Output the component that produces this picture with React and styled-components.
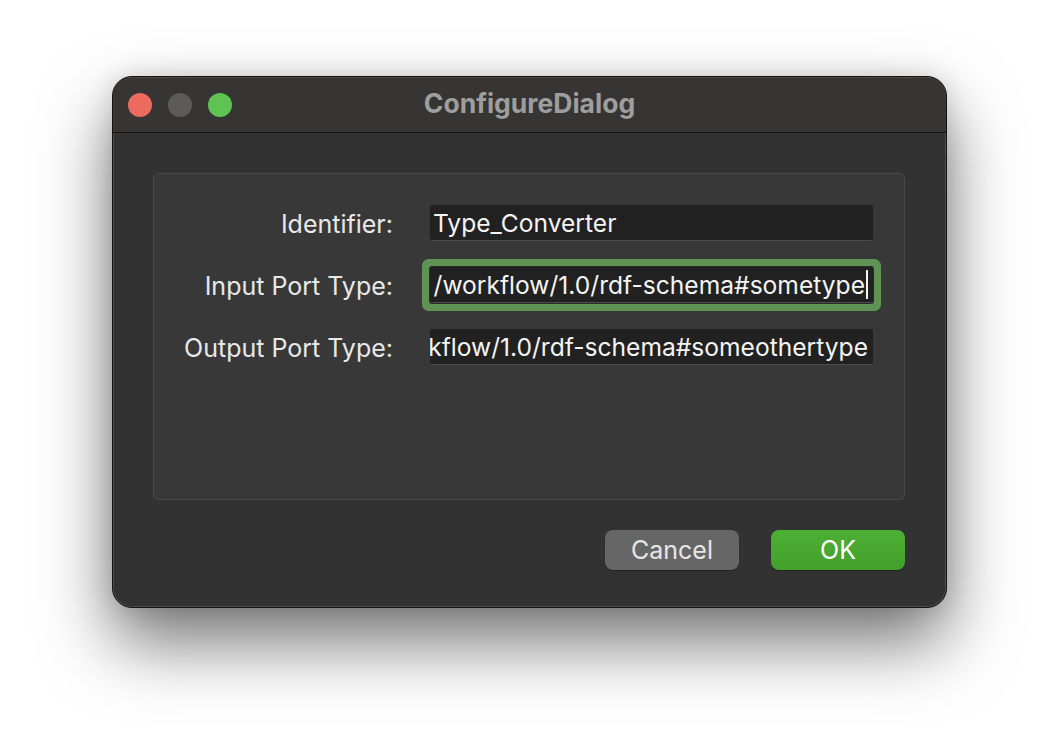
import React from "react";
import styled, { createGlobalStyle } from "styled-components";

const GlobalStyle = createGlobalStyle`
  * { box-sizing: border-box; }
  body {
    margin: 0;
    background: #ffffff;
    font-family: "Inter", "Liberation Sans", sans-serif;
  }
`;

const Page = styled.div`
  width: 1058px;
  height: 756px;
  padding: 76px 0 0 112px;
`;

const Window = styled.div`
  width: 835px;
  height: 532px;
  display: flex;
  flex-direction: column;
  background: #323232;
  border: 1px solid #141414;
  border-radius: 20px;
  overflow: hidden;
  box-shadow: inset 0 0 0 1px rgba(255, 255, 255, 0.13),
    0 34px 70px rgba(0, 0, 0, 0.55), 0 0 24px rgba(0, 0, 0, 0.12);
`;

const TitleBar = styled.div`
  height: 56px;
  flex-shrink: 0;
  display: grid;
  grid-template-columns: 1fr auto 1fr;
  align-items: center;
  padding: 0 15px;
  background: #363534;
  border-bottom: 1px solid #141414;
  box-shadow: inset 0 1px 0 rgba(255, 255, 255, 0.1);
`;

const Lights = styled.div`
  display: flex;
  gap: 16px;
`;

const Light = styled.span`
  width: 24px;
  height: 24px;
  border-radius: 50%;
  background: ${(p) => p.color};
`;

const Title = styled.div`
  color: #9e9e9e;
  font-size: 26.5px;
  font-weight: 700;
  line-height: 1;
  padding-bottom: 2px;
`;

const Body = styled.div`
  flex: 1;
  display: flex;
  flex-direction: column;
  padding: 40px 41px 0 40px;
`;

const GroupBox = styled.div`
  height: 327px;
  background: #383838;
  border: 1px solid #4a4a4a;
  border-radius: 6px;
  padding-top: 31px;
`;

const Form = styled.div`
  display: grid;
  grid-template-columns: 239px 443px;
  column-gap: 37px;
  row-gap: 26px;
  align-items: center;
`;

const Label = styled.div`
  text-align: right;
  color: #e8e8e8;
  font-size: 25px;
  line-height: 1;
  padding-top: 2px;
`;

const Field = styled.div`
  height: 36px;
  display: flex;
  align-items: center;
  justify-content: ${(p) => (p.scrolled ? "flex-end" : "flex-start")};
  overflow: hidden;
  white-space: nowrap;
  padding: 0 5px 0 3px;
  background: #212121;
  border-bottom: 1px solid #4c4c4c;
  border-radius: 2px;
  color: #f4f4f4;
  font-size: 24.6px;
  box-shadow: ${(p) =>
    p.focused ? "0 0 0 1px #2a2a2a, 0 0 0 8px #5e9354" : "none"};
`;

const Caret = styled.span`
  flex-shrink: 0;
  width: 2px;
  height: 29px;
  margin-left: 1px;
  background: #f2f2f2;
`;

const Buttons = styled.div`
  display: flex;
  justify-content: flex-end;
  gap: 32px;
  margin-top: 30px;
`;

const Button = styled.button`
  width: 134px;
  height: 40px;
  border: none;
  border-radius: 8px;
  font-family: inherit;
  font-size: 25px;
  line-height: 1;
  color: ${(p) => (p.primary ? "#ffffff" : "#e6e6e6")};
  background: ${(p) =>
    p.primary ? "linear-gradient(#4daf34, #43a02b)" : "#666666"};
  box-shadow: 0 1px 1px rgba(0, 0, 0, 0.35);
`;

export default function App() {
  return (
    <Page>
      <GlobalStyle />
      <Window>
        <TitleBar>
          <Lights>
            <Light color="#ed6a5e" />
            <Light color="#5c5b5a" />
            <Light color="#5fc354" />
          </Lights>
          <Title>ConfigureDialog</Title>
          <span />
        </TitleBar>
        <Body>
          <GroupBox>
            <Form>
              <Label>Identifier:</Label>
              <Field>Type_Converter</Field>
              <Label>Input Port Type:</Label>
              <Field focused scrolled>
                /workflow/1.0/rdf-schema#sometype
                <Caret />
              </Field>
              <Label>Output Port Type:</Label>
              <Field scrolled>kflow/1.0/rdf-schema#someothertype</Field>
            </Form>
          </GroupBox>
          <Buttons>
            <Button>Cancel</Button>
            <Button primary>OK</Button>
          </Buttons>
        </Body>
      </Window>
    </Page>
  );
}
